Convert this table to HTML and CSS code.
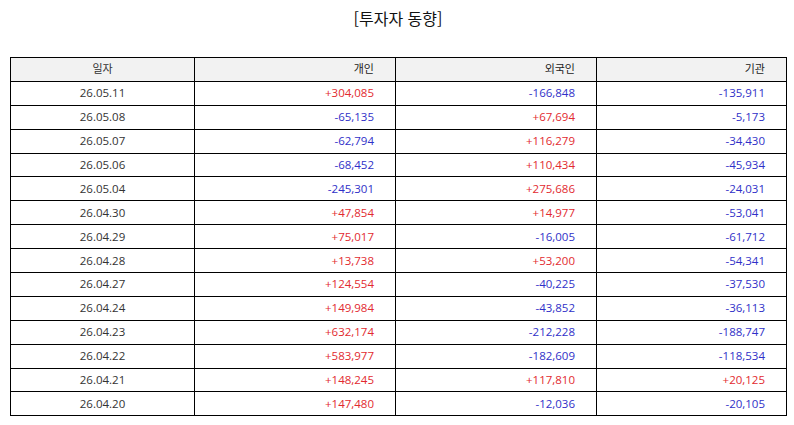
FILE: index.html
```html
<!DOCTYPE html>
<html lang="ko">
<head>
<meta charset="utf-8">
<link rel="stylesheet" href="styles.css">
</head>
<body>
<div class="page">
  <h1 class="title">[투자자 동향]</h1>
  <table class="flow">
    <colgroup>
      <col class="c-date"><col class="c-num"><col class="c-num"><col class="c-last">
    </colgroup>
    <thead>
      <tr><th class="date">일자</th><th>개인</th><th>외국인</th><th>기관</th></tr>
    </thead>
    <tbody>
      <tr><td class="date">26.05.11</td><td class="up">+304,085</td><td class="dn">-166,848</td><td class="dn">-135,911</td></tr>
      <tr><td class="date">26.05.08</td><td class="dn">-65,135</td><td class="up">+67,694</td><td class="dn">-5,173</td></tr>
      <tr><td class="date">26.05.07</td><td class="dn">-62,794</td><td class="up">+116,279</td><td class="dn">-34,430</td></tr>
      <tr><td class="date">26.05.06</td><td class="dn">-68,452</td><td class="up">+110,434</td><td class="dn">-45,934</td></tr>
      <tr><td class="date">26.05.04</td><td class="dn">-245,301</td><td class="up">+275,686</td><td class="dn">-24,031</td></tr>
      <tr><td class="date">26.04.30</td><td class="up">+47,854</td><td class="up">+14,977</td><td class="dn">-53,041</td></tr>
      <tr><td class="date">26.04.29</td><td class="up">+75,017</td><td class="dn">-16,005</td><td class="dn">-61,712</td></tr>
      <tr><td class="date">26.04.28</td><td class="up">+13,738</td><td class="up">+53,200</td><td class="dn">-54,341</td></tr>
      <tr><td class="date">26.04.27</td><td class="up">+124,554</td><td class="dn">-40,225</td><td class="dn">-37,530</td></tr>
      <tr><td class="date">26.04.24</td><td class="up">+149,984</td><td class="dn">-43,852</td><td class="dn">-36,113</td></tr>
      <tr><td class="date">26.04.23</td><td class="up">+632,174</td><td class="dn">-212,228</td><td class="dn">-188,747</td></tr>
      <tr><td class="date">26.04.22</td><td class="up">+583,977</td><td class="dn">-182,609</td><td class="dn">-118,534</td></tr>
      <tr><td class="date">26.04.21</td><td class="up">+148,245</td><td class="up">+117,810</td><td class="up">+20,125</td></tr>
      <tr><td class="date">26.04.20</td><td class="up">+147,480</td><td class="dn">-12,036</td><td class="dn">-20,105</td></tr>
    </tbody>
  </table>
</div>
</body>
</html>
```
FILE: styles.css
```css
html, body {
  margin: 0;
  padding: 0;
  background: #fff;
}
body {
  font-family: "Noto Sans CJK KR", "Noto Sans", sans-serif;
  color: #222;
}
.page {
  padding: 6px 8px 0 10px;
}
.title {
  margin: 0;
  font-size: 16px;
  font-weight: 400;
  line-height: 24px;
  text-align: center;
  color: #111;
}
.flow {
  margin-top: 27px;
  width: 776px;
  border-collapse: collapse;
  table-layout: fixed;
  font-family: "Open Sans", "Noto Sans CJK KR", sans-serif;
  font-size: 11.5px;
}
.c-date { width: 184px; }
.c-num { width: 201px; }
.c-last { width: 190px; }
.flow th, .flow td {
  border: 1.3px solid #000;
  height: 22.9px;
  padding: 0 21px 0 0;
  text-align: right;
  font-weight: 400;
  line-height: 14px;
  vertical-align: middle;
}
.flow th {
  background: #f2f2f2;
  color: #222;
  font-size: 11px;
}
.flow .date {
  text-align: center;
  padding: 0;
  color: #333;
}
.up { color: #e22a2f; }
.dn { color: #3030c8; }
```
